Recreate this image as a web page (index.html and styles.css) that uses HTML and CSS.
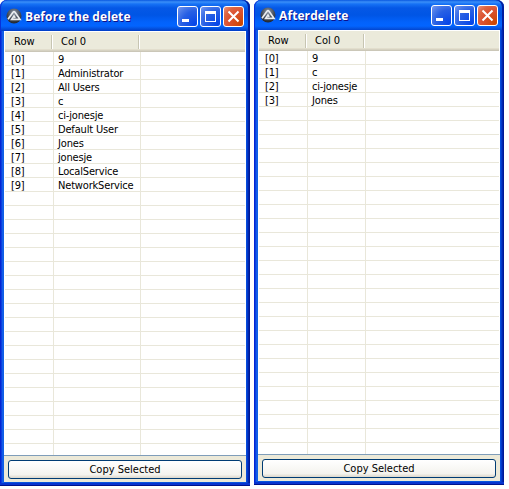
FILE: index.html
```
<!DOCTYPE html>
<html lang="en">
<head>
<meta charset="utf-8">
<title>Before and after the delete</title>
<link rel="stylesheet" href="styles.css">
</head>
<body>
<svg width="0" height="0" class="defs" aria-hidden="true">
  <defs>
    <radialGradient id="disc" cx=".5" cy=".3" r=".7"><stop offset="0" stop-color="#8d99a8"/><stop offset=".6" stop-color="#444c58"/><stop offset="1" stop-color="#20242c"/></radialGradient>
    <symbol id="app" viewBox="0 0 16 16"><circle cx="8" cy="8" r="7.5" fill="url(#disc)"/><path d="M2 11.3 7 4.2Q8 3 9 4.2L14 11.3H5.7L8 8.1l1.2 1.8" fill="none" stroke="#e9edf0" stroke-width="1.7"/></symbol>
    <symbol id="min" viewBox="0 0 19 19"><path d="M4 12h7v3H4z" fill="#fff"/></symbol>
    <symbol id="max" viewBox="0 0 19 19"><path d="M4 4h11v11H4zM5 7v7h9V7z" fill="#fff" fill-rule="evenodd"/></symbol>
    <symbol id="close" viewBox="0 0 19 19"><path d="m4.5 4.5 10 10m0-10-10 10" stroke="#fff" stroke-width="2"/></symbol>
  </defs>
</svg>
<main class="desktop">
  <section class="window before">
    <header class="titlebar">
      <svg class="app-icon"><use href="#app"/></svg><h1>Before the delete</h1>
      <div class="controls"><button class="ctl"><svg><use href="#min"/></svg></button><button class="ctl"><svg><use href="#max"/></svg></button><button class="ctl close"><svg><use href="#close"/></svg></button></div>
    </header>
    <div class="client">
      <div class="list">
        <div class="head"><span>Row</span><span>Col 0</span><span></span></div>
        <div class="rows">
          <div class="row"><span>[0]</span><span>9</span></div>
          <div class="row"><span>[1]</span><span>Administrator</span></div>
          <div class="row"><span>[2]</span><span>All Users</span></div>
          <div class="row"><span>[3]</span><span>c</span></div>
          <div class="row"><span>[4]</span><span>ci-jonesje</span></div>
          <div class="row"><span>[5]</span><span>Default User</span></div>
          <div class="row"><span>[6]</span><span>Jones</span></div>
          <div class="row"><span>[7]</span><span>jonesje</span></div>
          <div class="row"><span>[8]</span><span>LocalService</span></div>
          <div class="row"><span>[9]</span><span>NetworkService</span></div>
        </div>
      </div>
      <div class="footer"><button class="copy">Copy Selected</button></div>
    </div>
  </section>
  <section class="window after">
    <header class="titlebar">
      <svg class="app-icon"><use href="#app"/></svg><h1>Afterdelete</h1>
      <div class="controls"><button class="ctl"><svg><use href="#min"/></svg></button><button class="ctl"><svg><use href="#max"/></svg></button><button class="ctl close"><svg><use href="#close"/></svg></button></div>
    </header>
    <div class="client">
      <div class="list">
        <div class="head"><span>Row</span><span>Col 0</span><span></span></div>
        <div class="rows">
          <div class="row"><span>[0]</span><span>9</span></div>
          <div class="row"><span>[1]</span><span>c</span></div>
          <div class="row"><span>[2]</span><span>ci-jonesje</span></div>
          <div class="row"><span>[3]</span><span>Jones</span></div>
        </div>
      </div>
      <div class="footer"><button class="copy">Copy Selected</button></div>
    </div>
  </section>
</main>
</body>
</html>
```
FILE: styles.css
```
* { box-sizing: border-box; }
body { margin: 0; background: #fff; overflow: hidden; color: #000; font: 11px/14px "DejaVu Sans Condensed", "DejaVu Sans", sans-serif; }
.defs { position: absolute; }
.desktop { display: flex; align-items: flex-start; gap: 4px; }
.window {
  --cols: 48px 87px 1fr;
  width: 250px; height: 486px; padding: 0 4px 4px;
  display: flex; flex-direction: column;
  border-radius: 7px 7px 0 0;
  background: linear-gradient(90deg, #0019cf 0, #0831d9 1px, #166aee 3px, #0855dd 4px, #0855dd 246px, #0441d8 247px, #001ea0 249px, #00138c 250px);
  box-shadow: inset 0 -1px #00138c, inset 0 -3px #0734cf;
}
.after { --cols: 48px 58px 1fr; height: 485px; }
.titlebar {
  flex: 0 0 31px; margin: 0 -4px; padding: 2px 6px 0 6px;
  display: flex; align-items: center;
  border-radius: 7px 7px 0 0;
  background: linear-gradient(#0958e0 0, #3a8ff8 2px, #1672f5 4px, #0558e6 8px, #0055e5 15px, #0262fb 22px, #0264ff 26px, #0456e5 28px, #003cc5 31px);
  box-shadow: inset 1px 0 #0831d9, inset -2px 0 #001ea0;
}
.after .titlebar { flex-basis: 30px; padding-top: 1px; }
.app-icon { width: 16px; height: 16px; margin-right: 3px; position: relative; top: -1px; }
h1 { flex: 1; margin: 0; color: #fff; font: bold 12px/18px "Open Sans", sans-serif; letter-spacing: .1px; text-shadow: 1px 1px #0f1089; white-space: nowrap; }
.controls { display: flex; gap: 2px; }
.ctl {
  width: 21px; height: 21px; padding: 0; border: 1px solid #fff; border-radius: 3px;
  background: radial-gradient(circle at 90% 90%, #0545e8 0, #2860e4 55%, #4677e8 75%, #7798f0 100%);
}
.ctl.close { background: radial-gradient(circle at 90% 90%, #cc4600 0, #dc5232 55%, #dd6541 75%, #ec9480 100%); }
.ctl svg { display: block; width: 19px; height: 19px; }
.client { flex: 1; min-height: 0; display: flex; flex-direction: column; background: #ece9d8; }
.list { flex: 1; min-height: 0; display: flex; flex-direction: column; padding: 0 1px; background: #fff; border-top: 1px solid #fff; border-bottom: 1px solid #7f9db9; }
.head {
  flex: 0 0 20px; display: grid; grid-template-columns: var(--cols);
  background: linear-gradient(#ebeadb 17px, #e2decd 17px 18px, #d6d2c2 18px 19px, #cbc7b8 19px);
}
.head span { padding: 3px 0 0 9px; background: linear-gradient(90deg, #c7c5b2 1px, #fff 1px) right 3px/2px 14px no-repeat; }
.head span + span { padding-left: 8px; }
.head span:last-child { background: none; }
.rows {
  flex: 1; position: relative;
  background: repeating-linear-gradient(transparent 0 13px, #e9e7da 13px 14px);
}
.rows::before, .rows::after { content: ""; position: absolute; top: 0; bottom: 0; width: 1px; left: 48px; background: #e9e7da; }
.rows::after { left: 135px; }
.after .rows::after { left: 106px; }
.row { height: 14px; display: grid; grid-template-columns: var(--cols); line-height: 16px; letter-spacing: -.17px; }
.row span { padding-left: 5px; white-space: nowrap; }
.row span:first-child { padding-left: 6px; }
.footer { flex: 0 0 26px; padding: 4px 4px 0; }
.copy {
  display: block; width: 234px; height: 19px; padding: 0;
  border: 1px solid #003c74; border-radius: 3px;
  background: linear-gradient(#fff, #f4f3ee 80%, #dcd7cb);
  font: inherit; line-height: 16px; color: #000;
}
```
